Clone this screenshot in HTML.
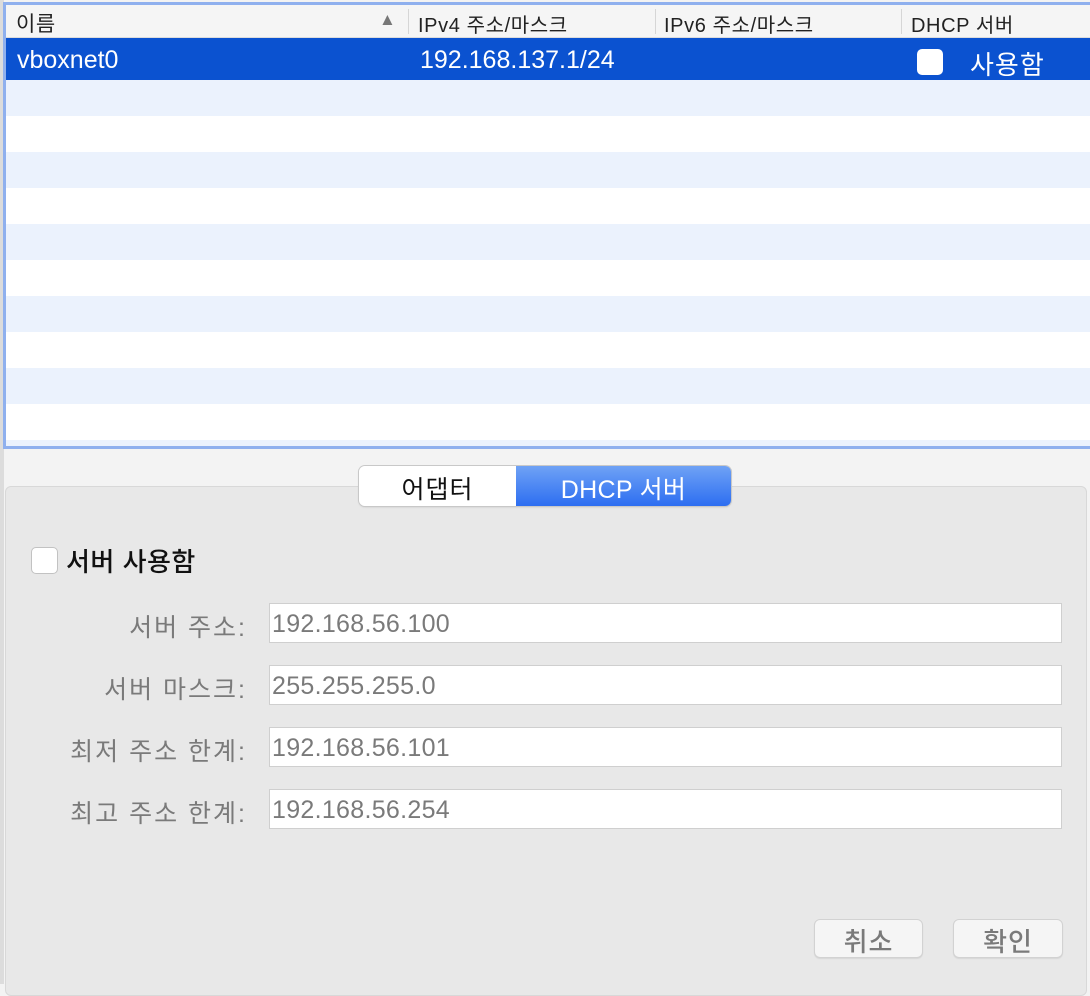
<!DOCTYPE html>
<html><head><meta charset="utf-8"><style>
*{margin:0;padding:0;box-sizing:border-box}
body{width:1090px;height:984px;background:#f3f3f3;position:relative;overflow:hidden;font-family:"Liberation Sans","Noto Sans CJK KR",sans-serif}
.a{position:absolute}
.tbl{left:3px;top:2px;width:1087px;height:447px;border:3px solid #8fb0ee;border-right:none;background:#fff;overflow:hidden}
.hdr{left:0;top:0;width:1090px;height:33px;background:#f5f5f5;border-bottom:1px solid #dcdcdc;font-size:20px;color:#222;letter-spacing:0.6px}
.hdr span{position:absolute;top:4px;white-space:nowrap}
.sep{position:absolute;top:4px;width:1px;height:25px;background:#d6d6d6}
.sel{left:0;top:33px;width:1090px;height:42px;background:#0b52d0;color:#fff;font-size:25px}
.row{left:0;width:1090px;height:36px;background:#ebf2fd}
.lbl{position:absolute;right:843px;font-size:25px;color:#7a7a7a;text-align:right;white-space:nowrap;letter-spacing:2px}
.inp{position:absolute;left:269px;width:793px;height:40px;background:#fff;border:1px solid #cfcfcf;font-size:25px;color:#7a7a7a;padding:6px 0 0 2px;letter-spacing:0.3px}
.btn{position:absolute;top:919px;height:39px;background:#f5f5f5;border:1px solid #d2d2d2;border-radius:6px;font-size:26px;color:#7a7a7a;text-align:center;padding-top:2px;box-shadow:0 1px 1px rgba(0,0,0,.08);font-weight:500;letter-spacing:1px}
</style></head><body>
<div class="a" style="left:0;top:0;width:4px;height:984px;background:#dcdcdc"></div>
<div class="a tbl">
 <div class="a hdr">
  <span style="left:10px;font-size:21px;top:3px">이름</span>
  <span style="left:373px;top:5px;font-size:17px;color:#777">▲</span>
  <div class="sep" style="left:402px"></div>
  <span style="left:412px">IPv4 주소/마스크</span>
  <div class="sep" style="left:649px"></div>
  <span style="left:658px">IPv6 주소/마스크</span>
  <div class="sep" style="left:895px"></div>
  <span style="left:905px">DHCP 서버</span>
 </div>
 <div class="a sel">
  <span class="a" style="left:11px;top:8px">vboxnet0</span>
  <span class="a" style="left:414px;top:8px">192.168.137.1/24</span>
  <div class="a" style="left:911px;top:11px;width:26px;height:26px;background:#fff;border-radius:5px"></div>
  <span class="a" style="left:964px;top:7px;font-size:26px;letter-spacing:1px">사용함</span>
 </div>
 <div class="a row" style="top:75px"></div>
 <div class="a row" style="top:147px"></div>
 <div class="a row" style="top:219px"></div>
 <div class="a row" style="top:291px"></div>
 <div class="a row" style="top:363px"></div>
 <div class="a row" style="top:435px"></div>
</div>
<div class="a" style="left:5px;top:486px;width:1082px;height:510px;background:#e8e8e8;border:1px solid #d8d8d8;border-radius:6px"></div>
<div class="a" style="left:359px;top:466px;width:372px;height:40px;border-radius:6px;overflow:hidden;box-shadow:0 0 0 1px #c8c8c8,0 1px 2px rgba(0,0,0,.15);font-size:25px">
 <div class="a" style="left:0;top:0;width:157px;height:40px;background:#fff;color:#111;text-align:center;padding-top:4px;letter-spacing:1px">어댑터</div>
 <div class="a" style="left:157px;top:0;width:215px;height:40px;background:linear-gradient(#6fa2f5,#2d6ef1);color:#fff;text-align:center;padding-top:4px;letter-spacing:0.3px">DHCP 서버</div>
</div>
<div class="a" style="left:31px;top:547px;width:27px;height:27px;background:#fff;border:1px solid #c2c2c2;border-radius:5px"></div>
<div class="a" style="left:66px;top:542px;font-size:26px;color:#111;font-weight:500;letter-spacing:0.5px">서버 사용함</div>
<div class="lbl" style="top:608px">서버 주소:</div>
<div class="inp" style="top:603px">192.168.56.100</div>
<div class="lbl" style="top:670px">서버 마스크:</div>
<div class="inp" style="top:665px">255.255.255.0</div>
<div class="lbl" style="top:732px">최저 주소 한계:</div>
<div class="inp" style="top:727px">192.168.56.101</div>
<div class="lbl" style="top:794px">최고 주소 한계:</div>
<div class="inp" style="top:789px">192.168.56.254</div>
<div class="btn" style="left:814px;width:109px">취소</div>
<div class="btn" style="left:953px;width:110px">확인</div>
</body></html>
